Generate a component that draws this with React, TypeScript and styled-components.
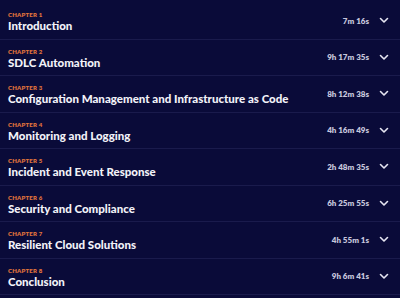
import React from 'react';
import styled, { createGlobalStyle } from 'styled-components';

const chapters = [
    { title: 'Introduction', time: '7m 16s' },
    { title: 'SDLC Automation', time: '9h 17m 35s' },
    { title: 'Configuration Management and Infrastructure as Code', time: '8h 12m 38s' },
    { title: 'Monitoring and Logging', time: '4h 16m 49s' },
    { title: 'Incident and Event Response', time: '2h 48m 35s' },
    { title: 'Security and Compliance', time: '6h 25m 55s' },
    { title: 'Resilient Cloud Solutions', time: '4h 55m 1s' },
    { title: 'Conclusion', time: '9h 6m 41s' },
];

const Chevron = () => (
    <svg width="10" height="7" viewBox="0 0 10 7" fill="none">
        <path d="M1.5 1.5 L5 5 L8.5 1.5" stroke="#e6e6f2" strokeWidth="1.6" strokeLinecap="round" strokeLinejoin="round" />
    </svg>
);

const App = () => {
    return <>
        <GlobalStyle />
        <List>
            {chapters.map((c, i) => (
                <Row key={i}>
                    <Info>
                        <Label>Chapter {i + 1}</Label>
                        <Title>{c.title}</Title>
                    </Info>
                    <Meta>
                        <Time>{c.time}</Time>
                        <Chevron />
                    </Meta>
                </Row>
            ))}
        </List>
    </>
}

export default App

const GlobalStyle = createGlobalStyle`
    body {
        margin: 0;
        background: #0a0b39;
        font-family: Lato, "Noto Sans", sans-serif;
    }
`
const List = styled.ul`
    list-style: none;
    margin: 0;
    padding: 3px 0 0;
    width: 400px;
    height: 298px;
    overflow: hidden;
    box-sizing: border-box;
    background: #0a0b39;
`
const Row = styled.li`
    display: flex;
    align-items: center;
    justify-content: space-between;
    height: 35.5px;
    box-sizing: content-box;
    padding: 0 11px 0 8px;
    border-bottom: 1px solid #1a1b4c;
`
const Info = styled.div`
    display: flex;
    flex-direction: column;
    padding-top: 2px;
`
const Label = styled.span`
    font-size: 6px;
    line-height: 9px;
    font-weight: 800;
    letter-spacing: 0.2px;
    text-transform: uppercase;
    color: #e0733c;
`
const Title = styled.span`
    font-size: 11.5px;
    line-height: 14px;
    font-weight: 900;
    color: #f2f2f8;
`
const Meta = styled.div`
    display: flex;
    align-items: center;
    gap: 10px;
`
const Time = styled.span`
    font-size: 8px;
    font-weight: 800;
    color: #c6c6dc;
`
